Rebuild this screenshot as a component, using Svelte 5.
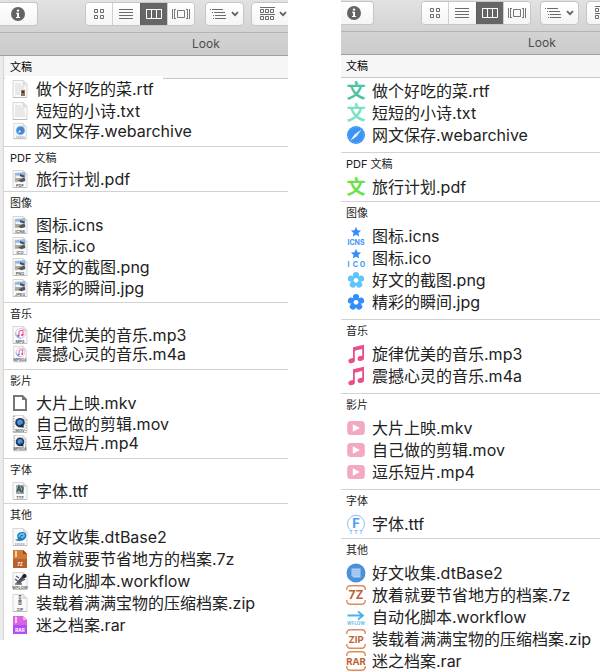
<script>
  const before = [
    { title: '文稿', end: 6, files: [
      ['做个好吃的菜.rtf', 'doc-rtf', '', 22],
      ['短短的小诗.txt', 'doc-txt', '', 22],
      ['网文保存.webarchive', 'doc-web', '', 18]] },
    { title: 'PDF 文稿', end: 2, files: [['旅行计划.pdf', 'doc-img', 'PDF', 20]] },
    { title: '图像', end: 4, files: [
      ['图标.icns', 'doc-img', 'ICNS', 22],
      ['图标.ico', 'doc-img', 'ICO', 20],
      ['好文的截图.png', 'doc-img', 'PNG', 22],
      ['精彩的瞬间.jpg', 'doc-img', 'JPEG', 20]] },
    { title: '音乐', end: 6, files: [
      ['旋律优美的音乐.mp3', 'doc-music', 'MP3', 20],
      ['震撼心灵的音乐.m4a', 'doc-music', 'MPEG4', 18]] },
    { title: '影片', end: 6, files: [
      ['大片上映.mkv', 'doc-blank', '', 22],
      ['自己做的剪辑.mov', 'doc-movie', 'MOV', 20],
      ['逗乐短片.mp4', 'doc-movie', 'MPEG4', 18]] },
    { title: '字体', end: 2, files: [['字体.ttf', 'doc-font', 'TTF', 20]] },
    { title: '其他', end: 4, files: [
      ['好文收集.dtBase2', 'doc-dt', '', 22],
      ['放着就要节省地方的档案.7z', 'doc-7z', '7Z', 22],
      ['自动化脚本.workflow', 'doc-flow', 'WFLOW', 22],
      ['装载着满满宝物的压缩档案.zip', 'doc-zip', 'ZIP', 22],
      ['迷之档案.rar', 'doc-rar', 'RAR', 22]] }
  ];

  const after = [
    { title: '文稿', end: 6, files: [
      ['做个好吃的菜.rtf', 'wen', '#4fc3a1', 22],
      ['短短的小诗.txt', 'wen', '#7de0c3', 22],
      ['网文保存.webarchive', 'compass', '', 22]] },
    { title: 'PDF 文稿', end: 3, files: [['旅行计划.pdf', 'wen', '#6be048', 22]] },
    { title: '图像', end: 6, files: [
      ['图标.icns', 'star', 'ICNS', 22],
      ['图标.ico', 'star', 'ICO', 22],
      ['好文的截图.png', 'flower', '#5bc6fa', 22],
      ['精彩的瞬间.jpg', 'flower', '#318efb', 22]] },
    { title: '音乐', end: 6, files: [
      ['旋律优美的音乐.mp3', 'note', '', 22],
      ['震撼心灵的音乐.m4a', 'note', '', 22]] },
    { title: '影片', end: 6, files: [
      ['大片上映.mkv', 'play', '', 22],
      ['自己做的剪辑.mov', 'play', '', 22],
      ['逗乐短片.mp4', 'play', '', 22]] },
    { title: '字体', end: 3, files: [['字体.ttf', 'font', '', 22]] },
    { title: '其他', end: 0, files: [
      ['好文收集.dtBase2', 'db', '', 22],
      ['放着就要节省地方的档案.7z', 'archive', '7Z', 22],
      ['自动化脚本.workflow', 'flow', '', 22],
      ['装载着满满宝物的压缩档案.zip', 'archive', 'ZIP', 22],
      ['迷之档案.rar', 'archive', 'RAR', 22]] }
  ];

  const petals = [0, 72, 144, 216, 288];
</script>

{#snippet icon(kind, arg)}
  <svg class="icon" viewBox="0 0 20 20" aria-hidden="true">
    {#if kind === 'doc-7z' || kind === 'doc-rar'}
      {@const rar = kind === 'doc-rar'}
      <path d="M3 1h10l4 4v14H3z" fill={rar ? '#b44cf0' : '#b8622a'} />
      <path d="M3 1h10l4 4v5H3z" fill={rar ? '#dc62e4' : '#d07a34'} />
      <path d="M13 1l4 4h-4z" fill={rar ? '#f0b0f4' : '#8e4a22'} />
      <path d="M5 2l2 1-2 1 2 1-2 1 2 1-2 1" stroke="#fff" fill="none" opacity=".8" />
      <text x="10" y="16.5" font-size="4.5" class="bold" text-anchor="middle" fill="#fff">{arg}</text>
    {:else if kind === 'doc-blank'}
      <path d="M4 3h8.5l3.5 3.5V17H4z" fill="#fff" stroke="#777" stroke-width="2" />
      <path d="M12 3v4h4z" fill="#777" />
    {:else if kind.startsWith('doc')}
      <path d="M3 1.5h10l4 4v13H3z" fill="#fafafa" stroke="#d6d6d6" />
      <path d="M3 18.5h14" stroke="#bdbdbd" />
      <path d="M13 1.5v4h4z" fill="#e4e4e4" stroke="#ccc" stroke-width=".6" />
      {#if kind === 'doc-rtf' || kind === 'doc-txt'}
        <path d="M5 5h6M5 7h10M5 9h9M5 11h10M5 13h5M5 15h5" stroke="#cecece" stroke-width=".8" />
        {#if kind === 'doc-rtf'}
          <path d="M11 11h4v6h-4z" fill="#8d7656" />
          <path d="M12 12h2v2h-2z" fill="#3d352d" />
        {:else}
          <path d="M10 13h5M10 15h5" stroke="#cecece" stroke-width=".8" />
        {/if}
      {:else if kind === 'doc-web'}
        <circle cx="10.5" cy="9.5" r="4.8" fill="#2d91e6" stroke="#8bbde4" stroke-width=".6" />
        <path d="M13.5 6.5l-2.3 4-1.5-1.5z" fill="#e94b3d" />
        <path d="M7.5 12.5l2.2-3.5 1.5 1.5z" fill="#f4f4f4" />
        <path d="M6 16.7h9" stroke="#888" stroke-dasharray="1.5 .5" />
      {:else if kind === 'doc-img'}
        <path d="M5 4.2l10-.7v8.7l-10 .6z" fill="#8fb6e6" stroke="#b5b5b5" stroke-width=".5" />
        <path d="M5.5 6.5l4 .3 5 1.2v1.5l-9-.5z" fill="#eef4fa" />
        <path d="M5.5 9.5l9-1v3.2l-9 .5z" fill="#b9a680" />
        <path d="M10 5l5 1.8-1 1.8-4-1.4z" fill="#3c5272" />
        <path d="M8 11.5l6.5-3 .8 3.2-3.8 1.6z" fill="#4c5560" />
      {:else if kind === 'doc-music'}
        <circle cx="10.5" cy="8.3" r="4.8" fill="#fff" stroke="#d9a7ed" stroke-width=".8" />
        <path d="M5.7 8.3a4.8 4.8 0 0 0 5 4.8" fill="none" stroke="#67b8ef" />
        <path d="M9 11V6l4-.8V10" fill="none" stroke="#ec4f82" />
        <circle cx="8.3" cy="10.8" r="1.2" fill="#7c6df0" /><circle cx="12.3" cy="10" r="1.2" fill="#ee4e6f" />
      {:else if kind === 'doc-movie'}
        <path d="M4 2v16M16 6v12" stroke="#777" stroke-width="1" stroke-dasharray="1 1.5" />
        <circle cx="10" cy="8.7" r="4.8" fill="#26384d" />
        <circle cx="10" cy="8.3" r="2.8" fill="#4597ee" />
        <path d="M10.5 9l4 4.5h-3z" fill="#172637" />
      {:else if kind === 'doc-font'}
        <path d="M6 4h8v9H6z" fill="#9daeb0" />
        <path d="M7 11l2-6 2 6M8 9h3M11 5l2 2-1 5" fill="none" stroke="#475356" stroke-width="1.3" />
      {:else if kind === 'doc-dt'}
        <path d="M5 13l3-1c-2-4 0-7 4-7 4 0 5 3 4 5-1 4-7 5-11 3z" fill="#1c7ebd" />
        <path d="M9 10c0-3 4-4 5-2 .6 2-2 3-3 1.6" fill="none" stroke="#7bd6ff" stroke-width="1.2" />
        <path d="M5 17h10" stroke="#888" stroke-dasharray="1.5 .5" />
      {:else if kind === 'doc-flow'}
        <path d="M6 12l7-8 2 2-5 7z" fill="#454a52" />
        <path d="M5 8l4 3 6-3M6 5l3 2M5 13h7" stroke="#5c6169" stroke-width="1.5" fill="none" />
        <circle cx="14.5" cy="5" r="2" fill="#1c1f25" />
      {:else if kind === 'doc-zip'}
        <path d="M10 2v6" stroke="#666" stroke-width="2.5" stroke-dasharray="1 .6" />
        <path d="M8.5 7h3v5h-3z" fill="#777" /><path d="M9.5 9.5h1v1.5h-1z" fill="#fff" />
      {/if}
      {#if arg}
        <text x="10" y="17.6" font-size="4" class="bold" text-anchor="middle" fill="#666">{arg}</text>
      {/if}
    {:else if kind === 'wen'}
      <text x="10" y="17" font-size="19" class="bold" text-anchor="middle" fill={arg}>文</text>
    {:else if kind === 'compass'}
      <circle cx="10" cy="10" r="9" fill="#3b93f5" />
      <circle cx="10" cy="10" r="7.6" fill="none" stroke="#8ec2fb" stroke-width="1" stroke-dasharray=".6 1.4" />
      <path d="M15.5 4.5l-4.4 6.6-2.2-2.2z" fill="#d6eaff" />
      <path d="M4.5 15.5l4.4-6.6 2.2 2.2z" fill="#fff" />
    {:else if kind === 'star'}
      <path d="M10 .8l1.5 3.4 3.6.4-2.7 2.4.8 3.6L10 8.8l-3.2 1.8.8-3.6-2.7-2.4 3.6-.4z" fill="#318efb" />
      {#if arg === 'ICNS'}
        <text x="10" y="18.5" font-size="7" class="bold" text-anchor="middle" fill="#3c94f8">ICNS</text>
      {:else}
        {#each ['I', 'C', 'O'] as c, i}
          <text x={2.4 + i * 7} y="18.5" font-size="7" class="bold" text-anchor="middle" fill="#3c94f8">{c}</text>
        {/each}
      {/if}
    {:else if kind === 'flower'}
      <g fill={arg}>
        {#each petals as a}
          <circle cx="10" cy="5" r="3.1" transform="rotate({a} 10 10.3)" />
        {/each}
        <circle cx="10" cy="10.3" r="4.2" />
      </g>
      <circle cx="10" cy="10.3" r="2.4" fill="#fff" />
    {:else if kind === 'note'}
      <path d="M7 3.3L18 .8v3.8L8.8 6.8v9.4H7z" fill="#e94f8d" />
      <path d="M16.2 3H18v11h-1.8z" fill="#e94f8d" />
      <ellipse cx="5.6" cy="16.7" rx="3.3" ry="2.4" transform="rotate(-18 5.6 16.7)" fill="#e94f8d" />
      <ellipse cx="14.8" cy="14.4" rx="3.3" ry="2.4" transform="rotate(-18 14.8 14.4)" fill="#e94f8d" />
    {:else if kind === 'play'}
      <rect x="1.2" y="3" width="17.6" height="14" rx="3.5" fill="#f3a9c4" />
      <path d="M6.8 6.3l7 3.7-7 3.7z" fill="#fff" />
    {:else if kind === 'font'}
      <path d="M3.6 15.4a8.5 8.5 0 1 1 12.8 0" fill="none" stroke="#7dc2fa" stroke-width="1" />
      <text x="10" y="13.8" font-size="13" class="bold" text-anchor="middle" fill="#4b9df5">F</text>
      {#each [5, 10, 15] as x}
        <text {x} y="19.8" font-size="5" class="bold" text-anchor="middle" fill="#6bb8fa">T</text>
      {/each}
    {:else if kind === 'db'}
      <circle cx="10" cy="10" r="9.5" fill="#4a90dc" />
      <path d="M5.5 5.6h9v8.8h-7l-2-2z" fill="#b4d2f3" />
      <path d="M5.5 7.6h9M5.5 9.8h9M5.5 12h9" stroke="#7fb2ea" stroke-width=".7" />
    {:else if kind === 'archive'}
      <path d="M.8 5V4a3.3 3.3 0 0 1 3.3-3.3h11.8A3.3 3.3 0 0 1 19.2 4v1M.8 15v1a3.3 3.3 0 0 0 3.3 3.3h11.8a3.3 3.3 0 0 0 3.3-3.3v-1" fill="none" stroke="#e08b5c" stroke-width="1.4" />
      <text x="10" y={arg === '7Z' ? 14.2 : 13.8} font-size={arg === '7Z' ? 12 : 9.5} class="bold" text-anchor="middle" fill="#bf6232">{arg}</text>
    {:else if kind === 'flow'}
      <path d="M1.5 8.5h15M12 4.5l5 4-5 4" fill="none" stroke="#4ab2ea" stroke-width="1.8" />
      <text x="10" y="17.6" font-size="4.5" class="bold" text-anchor="middle" fill="#66bfee">WFLOW</text>
    {/if}
  </svg>
{/snippet}

{#snippet chevron()}
  <svg width="8" height="6" viewBox="0 0 8 6" aria-hidden="true"><path d="M1 1.2l3 3 3-3" fill="none" stroke="#5f5f5f" stroke-width="1.7" /></svg>
{/snippet}

{#snippet finder(name, groups)}
  <section class="finder {name}">
    <div class="toolbar">
      <button class="btn info" aria-label="Get info">
        <svg width="14" height="14" viewBox="0 0 14 14" aria-hidden="true">
          <circle cx="7" cy="7" r="7" fill="#636363" />
          <circle cx="7" cy="3.6" r="1.2" fill="#fff" />
          <path d="M5.2 5.8H8v4.2h1.1v1.1H5V10h1.1V6.9h-.9z" fill="#fff" />
        </svg>
      </button>
      <div class="segments">
        <button aria-label="Icon view">
          <svg width="12" height="12" viewBox="0 0 12 12" fill="none" stroke="#6b6b6b" aria-hidden="true">
            <path d="M1.5 1.5h3v3h-3zM7.5 1.5h3v3h-3zM1.5 7.5h3v3h-3zM7.5 7.5h3v3h-3z" />
          </svg>
        </button>
        <button aria-label="List view">
          <svg width="14" height="12" viewBox="0 0 14 12" stroke="#6b6b6b" aria-hidden="true">
            <path d="M0 1.5h14M0 4.5h14M0 7.5h14M0 10.5h14" />
          </svg>
        </button>
        <button class="on" aria-label="Column view" aria-pressed="true">
          <svg width="16" height="12" viewBox="0 0 16 12" fill="none" stroke="#fff" aria-hidden="true">
            <path d="M.5 1.5h15v9H.5z" /><path d="M5.5 1v10M10.5 1v10" /><path d="M0 1.5h16" />
          </svg>
        </button>
        <button aria-label="Cover flow view">
          <svg width="18" height="12" viewBox="0 0 18 12" fill="none" stroke="#777" aria-hidden="true">
            <path d="M5.5 2.5h7v7h-7zM.5 1v10M2.5 1v10M2 1.5h2M2 10.5h2M17.5 1v10M15.5 1v10M14 1.5h2M14 10.5h2" />
          </svg>
        </button>
      </div>
      <button class="btn menu" aria-label="Group by">
        <svg width="17" height="12" viewBox="0 0 17 12" stroke="#6b6b6b" aria-hidden="true">
          <path d="M0 1.5h1M2 1.5h11M2 4.5h1M4 4.5h11M3 7.5h1M5 7.5h11M3 10.5h1M5 10.5h11" />
        </svg>
        {@render chevron()}
      </button>
      <button class="btn menu last" aria-label="Arrange">
        <svg width="15" height="14" viewBox="0 0 15 14" fill="none" stroke="#6b6b6b" aria-hidden="true">
          <path d="M0 .5h15M0 7.5h15" />
          <path d="M.5 2.5h3v3h-3zM5.5 2.5h3v3h-3zM10.5 2.5h3v3h-3zM.5 9.5h3v3h-3zM5.5 9.5h3v3h-3zM10.5 9.5h3v3h-3z" />
        </svg>
        {@render chevron()}
      </button>
    </div>
    <div class="titlebar"><span>Look</span></div>
    <div class="list">
      {#each groups as g}
        <div class="group end{g.end}">
          <h2>{g.title}</h2>
          <ul>
            {#each g.files as [label, kind, arg, h]}
              <li class="h{h}">{@render icon(kind, arg)}<span>{label}</span></li>
            {/each}
          </ul>
        </div>
      {/each}
    </div>
  </section>
{/snippet}

<main>
  {@render finder('before', before)}
  {@render finder('after', after)}
</main>

<style>
  :global(body) { background: #fff; overflow: hidden; }
  main {
    display: grid;
    grid-template-columns: 288fr 259fr;
    column-gap: 53px;
    align-items: start;
    font-family: Inter, "Noto Sans CJK SC", sans-serif;
    color: #222;
  }
  .finder { min-width: 0; overflow: hidden; }
  .toolbar {
    display: flex;
    align-items: flex-start;
    height: 32px;
    padding-top: 2px;
    box-sizing: border-box;
    background: linear-gradient(#e2e2e2, #d3d3d3);
  }
  .after .toolbar { height: 31px; padding-top: 1px; }
  button {
    display: flex;
    align-items: center;
    justify-content: center;
    flex: none;
    height: 24px;
    padding: 0;
    box-sizing: border-box;
    border: 0;
    background: linear-gradient(#fff, #f5f5f5);
  }
  .btn, .segments { border: 1px solid #c6c6c6; border-radius: 4px; }
  .info {
    width: 38px;
    justify-content: flex-end;
    padding-right: 12px;
    border-left: 0;
    border-radius: 0 4px 4px 0;
  }
  .after .info { width: 33px; }
  .segments {
    display: flex;
    flex: none;
    width: 110px;
    height: 24px;
    box-sizing: border-box;
    margin: 0 10px 0 47px;
    overflow: hidden;
  }
  .after .segments { margin: 0 9px 0 47px; }
  .segments button { flex: 1; height: 22px; }
  .segments button + button { border-left: 1px solid #d0d0d0; }
  .segments .on { background: #666; border-color: #5b5b5b; }
  .menu { width: 39px; gap: 4px; }
  .last { width: 44px; margin-left: 7px; }
  .titlebar {
    height: 22px;
    border-top: 1px solid #b4b4b4;
    border-bottom: 1px solid #a0a0a0;
    background: linear-gradient(#d3d3d3, #cbcbcb);
    font-size: 12px;
    line-height: 22px;
    color: #4c4c4c;
  }
  .titlebar span { margin-left: 192px; }
  .after .titlebar span { margin-left: 187px; }
  .before .list { border-left: 3px solid #ebebeb; }
  .before .group { border-left: 1px solid #d6d6d6; }
  .group { border-bottom: 1px solid #d2d2d2; }
  .group:last-child { border-bottom: 0; }
  .end2 { padding-bottom: 2px; }
  .end3 { padding-bottom: 3px; }
  .end4 { padding-bottom: 4px; }
  .end6 { padding-bottom: 6px; }
  h2 {
    position: relative;
    margin: 0;
    padding-left: 6px;
    height: 22px;
    font-size: 11px;
    font-weight: 400;
    line-height: 22px;
  }
  .after h2 { padding-left: 5px; }
  .group:first-child h2 {
    background: #f6f6f6;
    border-bottom: 1px solid #c8c8c8;
    color: #000;
  }
  .before .group:first-child ul { margin-top: -1px; }
  .before .group:first-child h2::after {
    content: "";
    position: absolute;
    left: 1px;
    bottom: -1px;
    width: 158px;
    height: 3px;
    background: #fff;
  }
  ul { margin: 0; padding: 0; list-style: none; }
  .after ul { padding-top: 1px; }
  .after .group:first-child ul { padding-top: 2px; }
  li {
    position: relative;
    display: flex;
    align-items: center;
    gap: 6px;
    padding-left: 6px;
    font-size: 16px;
    white-space: nowrap;
  }
  .after li { padding-left: 5px; }
  .h22 { height: 22px; line-height: 22px; }
  .h20 { height: 20px; line-height: 20px; }
  .h18 { height: 18px; line-height: 18px; }
  .icon { flex: none; width: 20px; height: 20px; overflow: visible; }
  .h18 .icon { height: 18px; }
  .bold { font-weight: 700; }
</style>
